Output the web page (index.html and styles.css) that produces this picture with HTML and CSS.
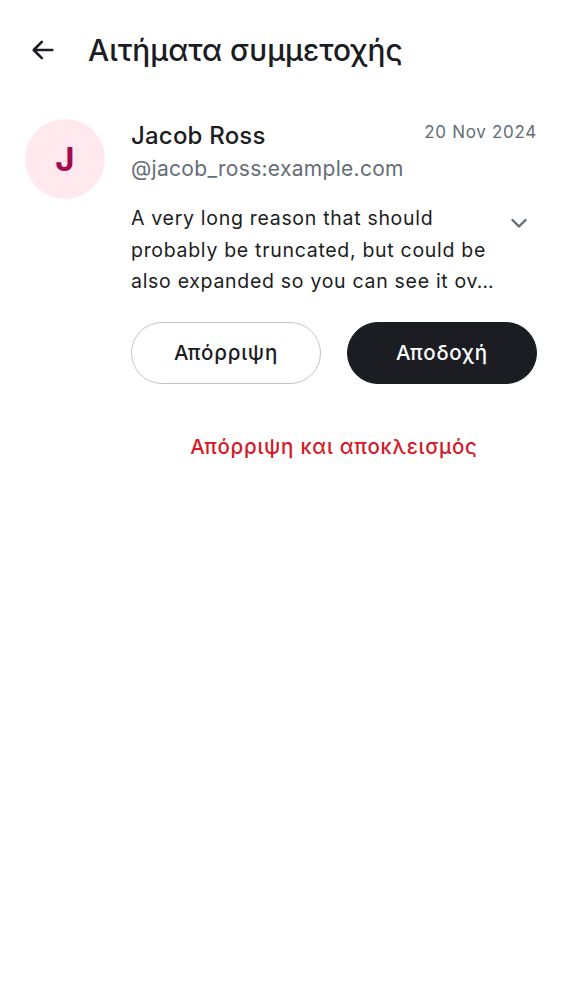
FILE: index.html
```html
<!DOCTYPE html>
<html lang="el">
<head>
<meta charset="utf-8">
<link rel="stylesheet" href="styles.css">
</head>
<body>
<header class="topbar">
  <svg class="back" width="28" height="28" viewBox="0 0 24 24"><path d="M20 12H5M11 5l-7 7 7 7" fill="none" stroke="#1b1d22" stroke-width="2.2" stroke-linecap="round" stroke-linejoin="round"/></svg>
  <h1 class="title">Αιτήματα συμμετοχής</h1>
</header>
<main class="item">
  <div class="avatar">J</div>
  <div class="content">
    <div class="row-head">
      <div class="name">Jacob Ross</div>
      <div class="date">20 Nov 2024</div>
    </div>
    <div class="handle">@jacob_ross:example.com</div>
    <div class="reason-row">
      <p class="reason">A very long reason that should probably be truncated, but could be also expanded so you can see it ov…</p>
      <svg class="chev" width="24" height="24" viewBox="0 0 24 24"><path d="M5.5 9l6.5 6.5 6.5-6.5" fill="none" stroke="#656d77" stroke-width="2.4" stroke-linecap="round" stroke-linejoin="round"/></svg>
    </div>
    <div class="buttons">
      <button class="btn btn-outline">Απόρριψη</button>
      <button class="btn btn-solid">Αποδοχή</button>
    </div>
    <div class="danger">Απόρριψη και αποκλεισμός</div>
  </div>
</main>
</body>
</html>
```
FILE: styles.css
```css
* { box-sizing: border-box; }
body {
  margin: 0;
  background: #ffffff;
  font-family: Inter, "Noto Sans", sans-serif;
  color: #1b1d22;
}
.topbar {
  display: flex;
  align-items: center;
  height: 100px;
  padding-left: 29px;
}
.back { display: block; }
.title {
  margin: 0 0 0 31px;
  font-size: 29.8px;
  font-weight: 500;
}
.item {
  display: flex;
  padding: 19px 25px 0 25px;
}
.avatar {
  width: 80px;
  height: 80px;
  border-radius: 50%;
  background: #ffe9ee;
  color: #a20a51;
  display: flex;
  align-items: center;
  justify-content: center;
  font-size: 33px;
  font-weight: 700;
  flex-shrink: 0;
}
.content {
  flex: 1;
  margin-left: 26px;
}
.row-head {
  display: flex;
  justify-content: space-between;
  align-items: flex-start;
}
.name {
  font-size: 24px;
  font-weight: 500;
  letter-spacing: 0.2px;
  line-height: 34px;
}
.date {
  font-size: 17px;
  color: #656d77;
  letter-spacing: 0.7px;
  line-height: 24px;
  margin-top: 1px;
}
.handle {
  font-size: 21px;
  color: #656d77;
  letter-spacing: 0.3px;
  line-height: 32px;
}
.reason-row {
  display: flex;
  align-items: flex-start;
  margin-top: 18px;
}
.reason {
  margin: 0;
  flex: 1;
  font-size: 19.5px;
  line-height: 31.5px;
  letter-spacing: 0.7px;
  color: #1b1d22;
  padding-right: 4px;
}
.chev { margin-top: 8px; margin-right: 6px; flex-shrink: 0; }
.buttons {
  display: flex;
  gap: 26px;
  margin-top: 24px;
}
.btn {
  flex: 1;
  height: 62px;
  border-radius: 31px;
  font-family: Inter, sans-serif;
  font-size: 20.5px;
  font-weight: 500;
  letter-spacing: 0.8px;
}
.btn-outline {
  background: #fff;
  border: 1px solid #c0c6ce;
  color: #1b1d22;
}
.btn-solid {
  background: #1b1d22;
  border: 1px solid #1b1d22;
  color: #fff;
}
.danger {
  text-align: center;
  margin-top: 50px;
  font-size: 20.5px;
  font-weight: 500;
  letter-spacing: 0.75px;
  color: #d51928;
}
```
